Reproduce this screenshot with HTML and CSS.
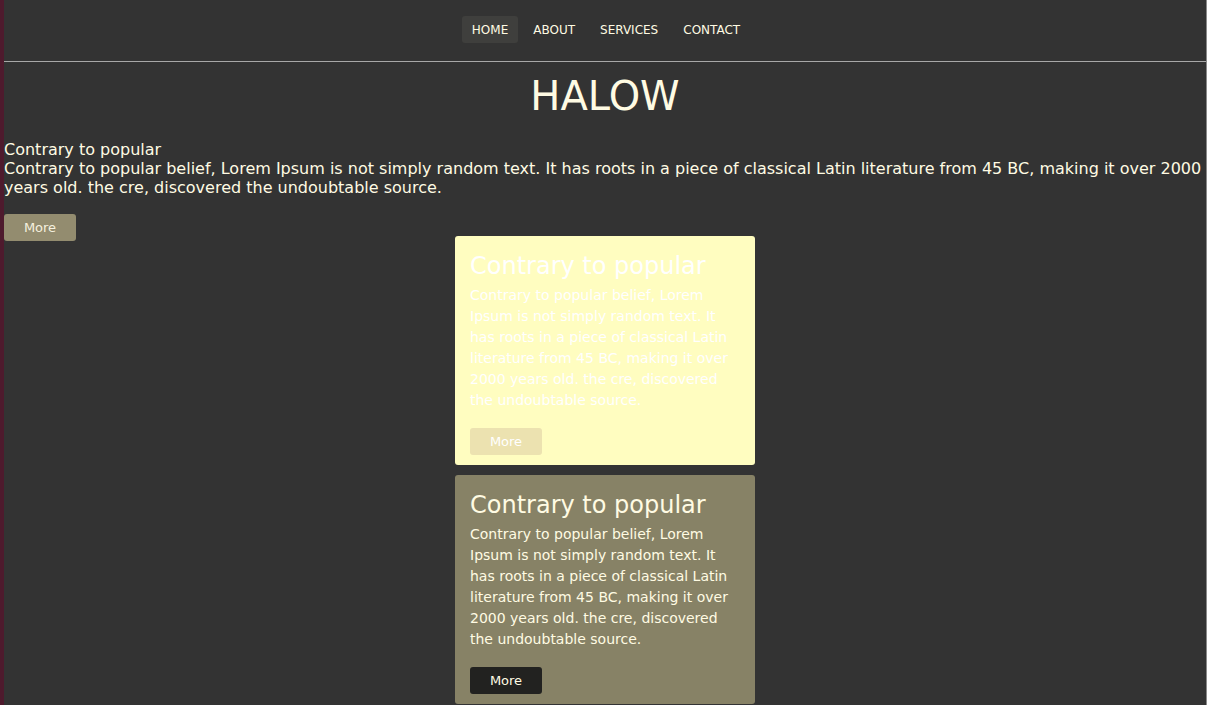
FILE: index.html
```html
<!DOCTYPE html>
<html lang="en">
<head>
<meta charset="utf-8">
<title>Halow</title>
<link rel="stylesheet" href="styles.css">
</head>
<body>
<div class="page">
  <header class="header">
    <nav class="nav">
      <a class="nav-link active" href="#">HOME</a>
      <a class="nav-link" href="#">ABOUT</a>
      <a class="nav-link" href="#">SERVICES</a>
      <a class="nav-link" href="#">CONTACT</a>
    </nav>
  </header>
  <hr class="rule">
  <h1 class="title">HALOW</h1>
  <section class="intro">
    <h2 class="intro-heading">Contrary to popular</h2>
    <p class="intro-text">Contrary to popular belief, Lorem Ipsum is not simply random text. It has roots in a piece of classical Latin literature from 45 BC, making it over 2000 years old. the cre, discovered the undoubtable source.</p>
    <a class="btn btn-main" href="#">More</a>
  </section>
  <section class="cards">
    <div class="card card-light">
      <h3 class="card-title">Contrary to popular</h3>
      <p class="card-text">Contrary to popular belief, Lorem Ipsum is not simply random text. It has roots in a piece of classical Latin literature from 45 BC, making it over 2000 years old. the cre, discovered the undoubtable source.</p>
      <a class="btn btn-light" href="#">More</a>
    </div>
    <div class="card card-olive">
      <h3 class="card-title">Contrary to popular</h3>
      <p class="card-text">Contrary to popular belief, Lorem Ipsum is not simply random text. It has roots in a piece of classical Latin literature from 45 BC, making it over 2000 years old. the cre, discovered the undoubtable source.</p>
      <a class="btn btn-dark" href="#">More</a>
    </div>
  </section>
</div>
</body>
</html>
```
FILE: styles.css
```css
html, body {
  margin: 0;
  padding: 0;
  height: 100%;
  background: #333333;
  overflow: hidden;
}
body {
  font-family: "DejaVu Sans", sans-serif;
  color: #fffbe3;
}
.page {
  box-sizing: border-box;
  width: 1207px;
  height: 705px;
  border-left: 4px solid #4e1a2d;
  border-right: 1px solid #8a8a8a;
  background: #333333;
}
.header {
  padding-top: 16px;
}
.nav {
  display: flex;
  justify-content: center;
  gap: 5px;
  padding-left: 2px;
}
.nav-link {
  display: block;
  font-size: 12px;
  line-height: 14px;
  padding: 6.5px 10px;
  color: #fffbe3;
  text-decoration: none;
  border-radius: 3px;
}
.nav-link.active {
  background: #3f3f3d;
}
.rule {
  margin: 18px 0 0;
  border: 0;
  height: 1px;
  background: #a8a8a8;
}
.title {
  margin: 11px 0 0;
  text-align: center;
  font-size: 40px;
  font-weight: normal;
  line-height: 46px;
}
.intro {
  margin-top: 21px;
}
.intro-heading {
  margin: 0;
  font-size: 16px;
  font-weight: normal;
  line-height: 19px;
}
.intro-text {
  margin: 0;
  font-size: 16px;
  line-height: 19px;
}
.btn {
  display: inline-flex;
  align-items: center;
  justify-content: center;
  width: 72px;
  height: 27px;
  border-radius: 3px;
  font-size: 13px;
  text-decoration: none;
}
.btn-main {
  margin-top: 17px;
  background: #938c6f;
  color: #f5f0de;
}
.cards {
  display: flex;
  flex-direction: column;
  align-items: center;
  gap: 10px;
  margin-top: -5px;
}
.card {
  box-sizing: border-box;
  width: 300px;
  padding: 16px 15px 10px;
  border-radius: 3px;
}
.card-title {
  margin: 0;
  font-size: 24px;
  font-weight: normal;
  line-height: 28px;
}
.card-text {
  margin: 5px 0 0;
  font-size: 14px;
  line-height: 21px;
}
.card .btn {
  margin-top: 17px;
}
.card-light {
  background: #fffdc0;
  color: #ffffff;
}
.btn-light {
  background: #ece2b0;
  color: #ffffff;
}
.card-olive {
  background: #878266;
  color: #fffbe3;
}
.btn-dark {
  background: #222220;
  color: #fffbe3;
}
```
